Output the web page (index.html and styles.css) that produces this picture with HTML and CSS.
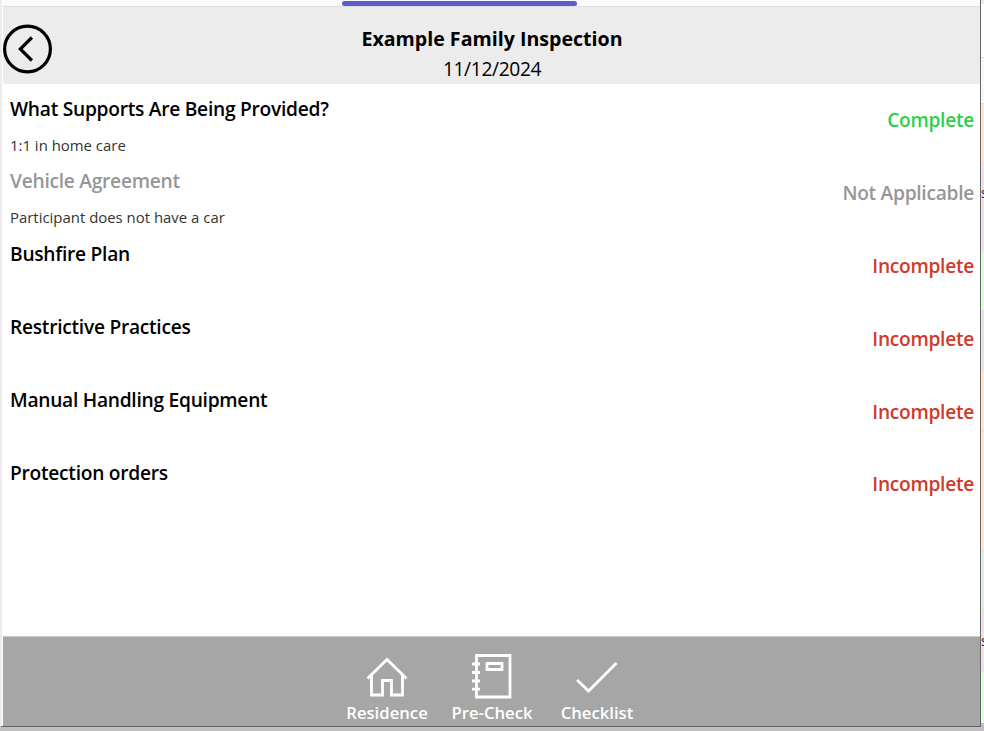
FILE: index.html
```
<!DOCTYPE html>
<html lang="en">
<head>
<meta charset="utf-8">
<title>Example Family Inspection</title>
<link rel="stylesheet" href="styles.css">
</head>
<body>
<div class="workspace">
  <div class="screen">
    <div class="tabstrip"><div class="tab-indicator"></div></div>
    <header class="header">
      <svg class="back" viewBox="0 0 50 50" fill="none" stroke="#000"><circle cx="25.5" cy="25" r="22.9" stroke-width="3.2"/><path d="M29.9 13.5 18.3 25 29.9 36.5" stroke-width="3.2"/></svg>
      <div class="heading">
        <h1>Example Family Inspection</h1>
        <p>11/12/2024</p>
      </div>
    </header>
    <main class="list">
      <section class="row"><div><h2>What Supports Are Being Provided?</h2><p>1:1 in home care</p></div><span class="status complete">Complete</span></section>
      <section class="row muted"><div><h2>Vehicle Agreement</h2><p>Participant does not have a car</p></div><span class="status">Not Applicable</span></section>
      <section class="row"><div><h2>Bushfire Plan</h2></div><span class="status incomplete">Incomplete</span></section>
      <section class="row"><div><h2>Restrictive Practices</h2></div><span class="status incomplete">Incomplete</span></section>
      <section class="row"><div><h2>Manual Handling Equipment</h2></div><span class="status incomplete">Incomplete</span></section>
      <section class="row"><div><h2>Protection orders</h2></div><span class="status incomplete">Incomplete</span></section>
    </main>
    <nav class="footer">
      <a class="item"><svg viewBox="0 0 50 50"><path d="M5.5 27.5 25 8.5 44.5 27.5M9.5 24.5v19.5h11V29.5h9V44H40.5V24.5"/></svg><span>Residence</span></a>
      <a class="item"><svg viewBox="0 0 50 50"><path d="M9.5 4.5h33.5v41.500h-33.500zM20 12.500h15v6h-15zM5 13h8M5 21.500h8M5 30h8M5 38.200h8"/></svg><span>Pre-Check</span></a>
      <a class="item"><svg viewBox="0 0 50 50"><path d="M5 29 16.500 40 44.500 12"/></svg><span>Checklist</span></a>
    </nav>
  </div>
  <aside class="edge">
    <i class="s-top"></i><i class="s-white"></i><i class="s-light"></i><i class="s-orange"></i><i class="s-pink tall"><b>s</b></i><i class="s-green"></i><i class="s-gray"></i><i class="s-orange"></i><i class="s-orange long"></i><i class="s-mint"></i><i class="s-pink"><b>s</b></i><i class="s-green last"></i>
  </aside>
</div>
</body>
</html>
```
FILE: styles.css
```
* { box-sizing: border-box; }
body { margin: 0; height: 731px; overflow: hidden; background: #bfbfbf; font-family: "Open Sans", sans-serif; color: #000; }
h1, h2, p { margin: 0; }
.workspace { display: flex; height: 731px; }
.screen { width: 981px; height: 727px; display: flex; flex-direction: column; background: #fff; border-left: 2px solid #ececec; border-right: 1px solid #666; border-bottom: 1px solid #606060; padding-left: 1px; }
.tabstrip { height: 7px; flex: none; padding: 1px 0 0 339px; background: #fafafa; border-bottom: 1px solid #dfdfdf; }
.tab-indicator { width: 235px; height: 5px; border-radius: 3px; background: #5b5fc7; }
.header { height: 77px; flex: none; background: #ececec; display: grid; grid-template-columns: 50px 1fr 50px; }
.back { width: 50px; height: 50px; margin: 17px 0 0 -1px; }
.heading { text-align: center; padding: 17px 0 0 1px; }
h1 { font-size: 19.6px; line-height: 30px; font-weight: 700; }
.heading p { font-size: 19.2px; line-height: 30px; letter-spacing: -0.36px; }
.list { flex: 1; padding: 0 6px 0 7px; }
.row { height: 72.8px; display: flex; justify-content: space-between; }
.row h2 { font-size: 19.2px; line-height: 26px; font-weight: 600; padding-top: 11.6px; letter-spacing: -0.27px; }
.row p { font-size: 14.93px; line-height: 20px; margin-top: 13px; color: #333; }
.status { font-size: 19.2px; line-height: 26px; padding-top: 23.4px; font-weight: 600; letter-spacing: -0.29px; }
.row.muted { color: #969696; }
.complete { color: #2bd14b; }
.incomplete { color: #cf3a2c; }
.footer { height: 90px; flex: none; background: #a6a6a6; border-top: 1px solid #c8c8c8; display: flex; justify-content: center; }
.item { width: 105px; display: flex; flex-direction: column; align-items: center; padding-top: 14px; color: #fff; }
.item svg { width: 50px; height: 50px; fill: none; stroke: #fff; stroke-width: 2.8; }
.item span { font-size: 16.7px; line-height: 22px; font-weight: 600; margin: 1px 0 0 1px; }
.edge { width: 3px; height: 731px; overflow: hidden; background: #bfbfbf; }
.edge i { display: block; height: 60px; border-top: 1px solid #dedede; overflow: hidden; font-style: normal; }
.edge b { display: block; font-size: 14px; line-height: 20px; font-weight: 400; color: #402028; padding-top: 19px; }
.edge .s-top { height: 4px; background: #ededed; border: 0; }
.edge .s-white { height: 53px; background: #fff; border: 0; }
.edge .s-light { height: 46px; background: #f8f8f8; }
.s-orange { background: #fde5d0; }
.s-pink { background: #f0dff0; }
.edge .tall { height: 87px; }
.s-green { background: #d9ffd9; }
.s-gray { background: #e5e5e5; }
.edge .s-gray { height: 61px; }
.edge .long { height: 120px; }
.s-mint { background: #dfece5; }
.edge .last { height: 52px; }
```
